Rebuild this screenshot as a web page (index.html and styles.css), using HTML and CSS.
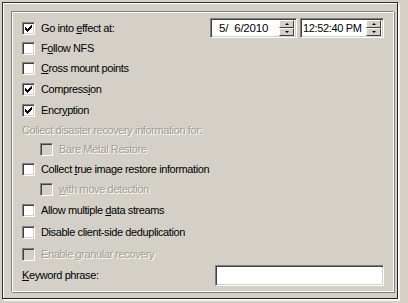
FILE: index.html
```html
<!DOCTYPE html>
<html>
<head>
<meta charset="utf-8">
<link rel="stylesheet" href="styles.css">
</head>
<body>
<div class="page">
  <div class="group">
    <div class="row h20 first">
      <span class="cb checked"></span><span class="lbl">Go into <u>e</u>ffect at:</span>
      <div class="pickers">
        <div class="picker date"><span class="ptext">5/&nbsp; 6/2010</span><span class="spin"><span class="sb up"></span><span class="sb down"></span></span></div>
        <div class="picker time"><span class="ptext">12:52:40 PM</span><span class="spin"><span class="sb up"></span><span class="sb down"></span></span></div>
      </div>
    </div>
    <div class="row h20"><span class="cb"></span><span class="lbl">F<u>o</u>llow NFS</span></div>
    <div class="row h21"><span class="cb"></span><span class="lbl"><u>C</u>ross mount points</span></div>
    <div class="row h21"><span class="cb checked"></span><span class="lbl">Compress<u>i</u>on</span></div>
    <div class="row h20"><span class="cb checked"></span><span class="lbl">Encr<u>y</u>ption</span></div>
    <div class="row h20"><span class="lbl dis plain">Collect disaster recovery information for:</span></div>
    <div class="row h19 indent"><span class="cb disabled"></span><span class="lbl dis">Bare Metal Restore</span></div>
    <div class="row h20"><span class="cb"></span><span class="lbl">Collect <u>t</u>rue image restore information</span></div>
    <div class="row h20 indent"><span class="cb disabled"></span><span class="lbl dis"><u>w</u>ith move detection</span></div>
    <div class="row h22"><span class="cb"></span><span class="lbl">Allow multiple <u>d</u>ata streams</span></div>
    <div class="row h23"><span class="cb"></span><span class="lbl">Disable client-side deduplication</span></div>
    <div class="row h21"><span class="cb disabled"></span><span class="lbl dis">Enable <u>g</u>ranular recovery</span></div>
    <div class="row h21 kw"><span class="lbl plain"><u>K</u>eyword phrase:</span><div class="textbox"></div></div>
  </div>
</div>
</body>
</html>
```
FILE: styles.css
```css
html, body {
  margin: 0;
  padding: 0;
  background: #d4d0c8;
}
body {
  width: 408px;
  height: 303px;
  font-family: "Liberation Sans", Arial, sans-serif;
  font-size: 11px;
  letter-spacing: -0.4px;
  color: #000;
  overflow: hidden;
}
.page {
  margin: 2px 0 0 2px;
  width: 396px;
  height: 297px;
  border: 1px solid #303030;
  border-right-color: #202020;
  border-bottom-color: #202020;
  box-shadow: 1px 1px 0 #ffffff, 2px 2px 0 #f4f4f4, inset 1px 1px 0 #ffffff;
  box-sizing: border-box;
  padding: 8px 0 0 8px;
}
.group {
  width: 383px;
  height: 281px;
  box-sizing: border-box;
  border: 1px solid #808080;
  border-right-color: #ffffff;
  border-bottom-color: #ffffff;
  box-shadow: inset 1px 1px 0 #ffffff, 1px 1px 0 #808080;
  padding: 6px 0 0 10px;
  display: flex;
  flex-direction: column;
}
.row {
  display: flex;
  align-items: center;
  position: relative;
}
.h19 { height: 19px; }
.h20 { height: 20px; }
.h21 { height: 21px; }
.h22 { height: 22px; }
.h23 { height: 23px; }
.indent { padding-left: 18px; }
.cb {
  width: 13px;
  height: 13px;
  box-sizing: border-box;
  background: #fff;
  border: 1px solid #808080;
  border-right-color: #fff;
  border-bottom-color: #fff;
  box-shadow: inset 1px 1px 0 #404040, inset -1px -1px 0 #d4d0c8;
  flex: none;
  position: relative;
}
.cb.disabled {
  background: #d4d0c8;
}
.cb.checked::after {
  content: "";
  position: absolute;
  left: 2px;
  top: 2px;
  width: 7px;
  height: 7px;
  background:
    linear-gradient(#000, #000) 0 2px / 1px 3px no-repeat,
    linear-gradient(#000, #000) 1px 3px / 1px 3px no-repeat,
    linear-gradient(#000, #000) 2px 4px / 1px 3px no-repeat,
    linear-gradient(#000, #000) 3px 3px / 1px 3px no-repeat,
    linear-gradient(#000, #000) 4px 2px / 1px 3px no-repeat,
    linear-gradient(#000, #000) 5px 1px / 1px 3px no-repeat,
    linear-gradient(#000, #000) 6px 0 / 1px 3px no-repeat;
}
.lbl {
  margin-left: 6px;
  white-space: nowrap;
  line-height: 13px;
}
.lbl.plain { margin-left: 0; }
.dis {
  color: #a09c94;
  text-shadow: 1px 1px 0 #ffffff;
}
u { text-decoration-thickness: 1px; text-underline-offset: 1px; }
.pickers {
  position: absolute;
  left: 188px;
  top: 0;
  display: flex;
  gap: 3px;
}
.picker {
  height: 20px;
  box-sizing: border-box;
  background: #fff;
  border: 1px solid #808080;
  border-right-color: #fff;
  border-bottom-color: #fff;
  box-shadow: inset 1px 1px 0 #404040, inset -1px -1px 0 #d4d0c8;
  display: flex;
  align-items: center;
  justify-content: space-between;
  padding: 2px 2px 2px 0;
  white-space: nowrap;
}
.date { width: 87px; }
.time { width: 84px; }
.ptext { font-size: 11.5px; letter-spacing: -0.2px; }
.date .ptext { padding-left: 8px; }
.time .ptext { padding-left: 2px; font-size: 11px; letter-spacing: -0.35px; }
.spin {
  display: flex;
  flex-direction: column;
  width: 15px;
  height: 16px;
  flex: none;
}
.sb {
  flex: 1;
  background: #d4d0c8;
  box-sizing: border-box;
  border: 1px solid #fff;
  border-right-color: #404040;
  border-bottom-color: #404040;
  position: relative;
}
.sb::after {
  content: "";
  position: absolute;
  left: 5px;
  width: 0;
  height: 0;
  border-left: 2px solid transparent;
  border-right: 2px solid transparent;
}
.sb.up::after { top: 2px; border-bottom: 2px solid #000; }
.sb.down::after { top: 2px; border-top: 2px solid #000; }
.kw .textbox {
  position: absolute;
  left: 193px;
  top: 0;
  width: 169px;
  height: 21px;
  box-sizing: border-box;
  background: #fff;
  border: 1px solid #808080;
  border-right-color: #fff;
  border-bottom-color: #fff;
  box-shadow: inset 1px 1px 0 #404040, inset -1px -1px 0 #d4d0c8;
}
```
